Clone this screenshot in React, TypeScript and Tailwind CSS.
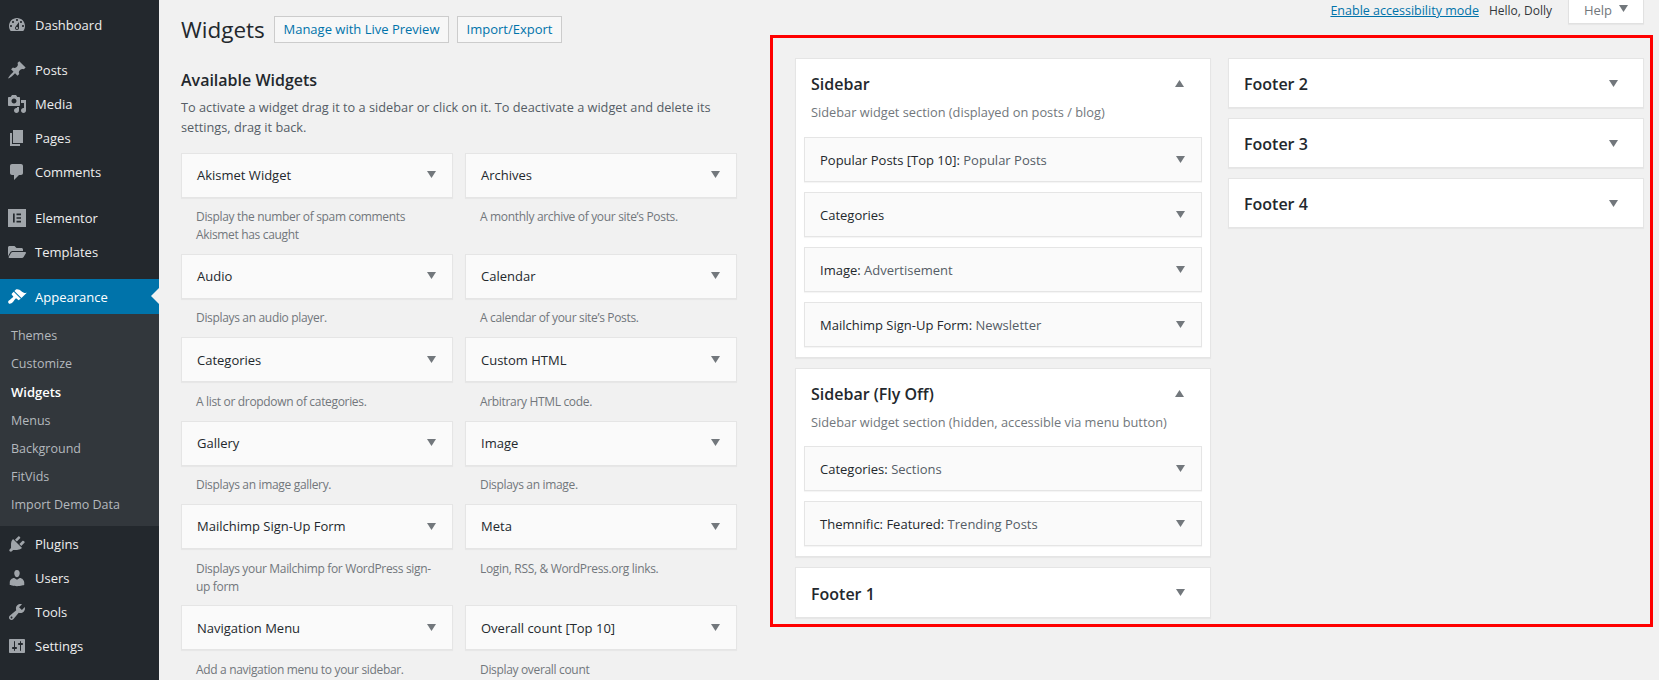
import { FaFolderOpen } from "react-icons/fa"

const icons: Record<string, string> = {
  dashboard: "M3.76 16h12.48c1.1-1.37 1.76-3.11 1.76-5 0-4.42-3.58-8-8-8s-8 3.58-8 8c0 1.89.66 3.63 1.76 5zM10 4c.55 0 1 .45 1 1s-.45 1-1 1-1-.45-1-1 .45-1 1-1zM6 6c.55 0 1 .45 1 1s-.45 1-1 1-1-.45-1-1 .45-1 1-1zm8 0c.55 0 1 .45 1 1s-.45 1-1 1-1-.45-1-1 .45-1 1-1zm-5.37 5.55L12 7v6c0 1.1-.9 2-2 2s-2-.9-2-2c0-.57.24-1.08.63-1.45zM4 10c.55 0 1 .45 1 1s-.45 1-1 1-1-.45-1-1 .45-1 1-1zm12 0c.55 0 1 .45 1 1s-.45 1-1 1-1-.45-1-1 .45-1 1-1zm-5 3c0-.55-.45-1-1-1s-1 .45-1 1 .45 1 1 1 1-.45 1-1z",
  posts: "M10.44 3.02l1.82-1.82 6.36 6.35-1.83 1.82c-1.05-.68-2.48-.57-3.41.36l-.75.75c-.92.93-1.04 2.35-.35 3.41l-1.83 1.82-2.41-2.41-2.8 2.79c-.42.42-3.38 2.71-3.8 2.29s1.86-3.39 2.28-3.81l2.79-2.79L4.1 9.36l1.83-1.82c1.05.69 2.48.57 3.4-.36l.75-.75c.93-.92 1.05-2.35.36-3.41z",
  media: "M13 11V4c0-.55-.45-1-1-1h-1.67L9 1H5L3.67 3H2c-.55 0-1 .45-1 1v7c0 .55.45 1 1 1h10c.55 0 1-.45 1-1zM7 4.5c1.38 0 2.5 1.12 2.5 2.5S8.38 9.5 7 9.5 4.5 8.38 4.5 7 5.62 4.5 7 4.5zM14 6h5v10.5c0 1.38-1.12 2.5-2.5 2.5S14 17.88 14 16.5s1.12-2.5 2.5-2.5c.17 0 .34.02.5.05V9h-3V6zm-4 8.05V13h2v3.5c0 1.38-1.12 2.5-2.5 2.5S7 17.88 7 16.5 8.12 14 9.5 14c.17 0 .34.02.5.05z",
  pages: "M6 15V2h10v13H6zm-1 1h8v2H3V5h2v11z",
  comments: "M5 2h9c1.1 0 2 .9 2 2v7c0 1.1-.9 2-2 2h-2l-5 5v-5H5c-1.1 0-2-.9-2-2V4c0-1.1.9-2 2-2z",
  appearance: "M14.48 11.06L7.41 3.99l1.5-1.5c.5-.56 2.3-.47 3.51.32 1.21.8 1.43 1.28 2.91 2.1 1.18.64 2.45 1.26 4.45.85zm-.71.71L6.7 4.7 4.93 6.47c-.39.39-.39 1.02 0 1.41l1.06 1.06c.39.39.39 1.03 0 1.42-.6.6-1.43 1.11-2.21 1.69-.35.26-.7.53-1.01.84C1.43 13.23.5 15 1.65 16.15s2.92.22 4.27-1.12c.31-.31.58-.66.84-1.01.58-.78 1.09-1.61 1.69-2.21.39-.39 1.02-.39 1.41 0l1.06 1.06c.39.39 1.02.39 1.41 0z",
  plugins: "M13.11 4.36L9.87 7.6 8 5.73l3.24-3.24c.35-.34 1.05-.2 1.56.32.52.51.66 1.21.31 1.55zm-8 1.77l.91-1.12 9.01 9.01-1.19.84c-.71.71-2.63 1.16-3.82 1.16H6.14L4.9 17.26c-.59.59-1.54.59-2.12 0-.59-.58-.59-1.53 0-2.12l1.24-1.24v-3.88c0-1.13.4-3.19 1.09-3.89zm7.26 3.97l3.24-3.24c.34-.35 1.04-.21 1.55.31.52.51.66 1.21.31 1.55l-3.24 3.25z",
  users: "M10 9.25c-2.27 0-2.73-3.44-2.73-3.44C7 4.02 7.82 2 9.97 2c2.16 0 2.98 2.02 2.71 3.81 0 0-.41 3.44-2.68 3.44zm0 2.57L12.72 10c2.39 0 4.52 2.33 4.52 4.53v2.49s-3.65 1.13-7.24 1.13c-3.65 0-7.24-1.13-7.24-1.13v-2.49c0-2.25 1.94-4.48 4.47-4.48z",
  tools: "M16.68 9.77c-1.34 1.34-3.3 1.67-4.95.99l-5.41 6.52c-.99.99-2.59.99-3.58 0s-.99-2.59 0-3.57l6.52-5.42c-.68-1.65-.35-3.61.99-4.95 1.28-1.28 3.12-1.62 4.72-1.06l-2.89 2.89 2.82 2.82 2.86-2.87c.53 1.58.18 3.39-1.08 4.65zM3.81 16.21c.4.39 1.04.39 1.43 0 .4-.4.4-1.04 0-1.43-.39-.4-1.03-.4-1.43 0-.39.39-.39 1.03 0 1.43z",
  settings: "M18 16V4c0-.55-.45-1-1-1H3c-.55 0-1 .45-1 1v12c0 .55.45 1 1 1h14c.55 0 1-.45 1-1zM8 11h1c.55 0 1 .45 1 1s-.45 1-1 1H8v1.5c0 .28-.22.5-.5.5s-.5-.22-.5-.5V13H6c-.55 0-1-.45-1-1s.45-1 1-1h1V5.5c0-.28.22-.5.5-.5s.5.22.5.5V11zm5-2h-1c-.55 0-1-.45-1-1s.45-1 1-1h1V5.5c0-.28.22-.5.5-.5s.5.22.5.5V7h1c.55 0 1 .45 1 1s-.45 1-1 1h-1v5.5c0 .28-.22.5-.5.5s-.5-.22-.5-.5V9z",
}

function MenuIcon({ name }: { name: string }) {
  if (name === "elementor") {
    return (
      <svg width="18" height="18" viewBox="0 0 18 18" className="fill-current">
        <path fillRule="evenodd" d="M0 0h18v18H0zM5 4.5v9h1.7v-9zM8.5 4.5v1.7H13V4.5zM8.5 8.2v1.6H13V8.2zM8.5 11.8v1.7H13v-1.7z" />
      </svg>
    )
  }
  if (name === "templates") return <FaFolderOpen size={18} />
  return (
    <svg width="20" height="20" viewBox="0 0 20 20" className="fill-current">
      <path d={icons[name]} />
    </svg>
  )
}

function MenuItem({ icon, label }: { icon: string; label: string }) {
  return (
    <div className="flex h-[34px] items-center text-[13px] text-[#eeeeee]">
      <span className="flex w-[35px] justify-center pl-[1px] pr-[2px] text-[#a0a5aa]">
        <MenuIcon name={icon} />
      </span>
      <span className="pt-[2px]">{label}</span>
    </div>
  )
}

function Arrow({ up = false, className = "" }: { up?: boolean; className?: string }) {
  return (
    <svg width="9" height="7" viewBox="0 0 9 7" className={"fill-[#72777c] " + className}>
      <polygon points={up ? "4.5,0 9,7 0,7" : "0,0 9,0 4.5,7"} />
    </svg>
  )
}

function Sidebar() {
  const submenu = ["Themes", "Customize", "Widgets", "Menus", "Background", "FitVids", "Import Demo Data"]
  return (
    <aside className="h-[680px] w-[159px] shrink-0 bg-[#23282d] pt-[8px]">
      <MenuItem icon="dashboard" label="Dashboard" />
      <div className="mt-[11px]">
        <MenuItem icon="posts" label="Posts" />
        <MenuItem icon="media" label="Media" />
        <MenuItem icon="pages" label="Pages" />
        <MenuItem icon="comments" label="Comments" />
      </div>
      <div className="mt-[12px]">
        <MenuItem icon="elementor" label="Elementor" />
        <MenuItem icon="templates" label="Templates" />
      </div>
      <div className="relative mt-[10px] flex h-[35px] items-center bg-[#0073aa] text-[13px] text-white">
        <span className="flex w-[35px] justify-center pl-[1px] pr-[2px]">
          <MenuIcon name="appearance" />
        </span>
        <span className="pt-[2px]">Appearance</span>
        <span className="absolute right-0 top-[9px] h-0 w-0 border-y-[8px] border-r-[8px] border-y-transparent border-r-[#f1f1f1]" />
      </div>
      <div className="flex h-[212px] flex-col bg-[#32373c] pt-[8.5px]">
        {submenu.map((s) => (
          <div
            key={s}
            className={
              "flex h-[28.2px] items-center pl-[11px] " +
              (s === "Widgets" ? "text-[13px] font-semibold text-white" : "text-[12.5px] text-[#b4b9be]")
            }
          >
            {s}
          </div>
        ))}
      </div>
      <div className="mt-[1px]">
        <MenuItem icon="plugins" label="Plugins" />
        <MenuItem icon="users" label="Users" />
        <MenuItem icon="tools" label="Tools" />
        <MenuItem icon="settings" label="Settings" />
      </div>
    </aside>
  )
}

const available = [
  { title: "Akismet Widget", desc: "Display the number of spam comments Akismet has caught" },
  { title: "Archives", desc: "A monthly archive of your site’s Posts." },
  { title: "Audio", desc: "Displays an audio player." },
  { title: "Calendar", desc: "A calendar of your site’s Posts." },
  { title: "Categories", desc: "A list or dropdown of categories." },
  { title: "Custom HTML", desc: "Arbitrary HTML code." },
  { title: "Gallery", desc: "Displays an image gallery." },
  { title: "Image", desc: "Displays an image." },
  { title: "Mailchimp Sign-Up Form", desc: "Displays your Mailchimp for WordPress sign-up form" },
  { title: "Meta", desc: "Login, RSS, & WordPress.org links." },
  { title: "Navigation Menu", desc: "Add a navigation menu to your sidebar." },
  { title: "Overall count [Top 10]", desc: "Display overall count" },
]

function AvailableWidgets() {
  return (
    <section className="w-[611px] shrink-0 pl-[22px] pr-[33px] pt-[16px]">
      <div className="flex h-[27px] items-center">
        <h1 className="w-[93px] pt-[1px] text-[22.5px] font-normal text-[#23282d]">Widgets</h1>
        <a className="mr-[8px] flex h-[27px] w-[175px] items-center justify-center border border-[#cccccc] bg-[#f7f7f7] text-[13px] font-medium text-[#0073aa]">
          Manage with Live Preview
        </a>
        <a className="flex h-[27px] w-[105px] items-center justify-center border border-[#cccccc] bg-[#f7f7f7] text-[13px] font-medium text-[#0073aa]">
          Import/Export
        </a>
      </div>
      <h2 className="mt-[26px] text-[16px] font-semibold leading-[22px] text-[#23282d]">Available Widgets</h2>
      <p className="mt-[6px] text-[12.75px] leading-[20px] text-[#555d66]">
        To activate a widget drag it to a sidebar or click on it. To deactivate a widget and delete its settings, drag it back.
      </p>
      <div className="mt-[15.5px] grid grid-cols-2 gap-x-[12px]">
        {available.map((w) => (
          <div key={w.title} className="pb-[9.9px]">
            <div className="flex h-[45px] items-center justify-between border border-[#e5e5e5] bg-[#fafafa] pl-[15px] pr-[16px] pt-[1px] shadow-[0_1px_1px_rgba(0,0,0,0.04)]">
              <span className="text-[13px] font-medium text-[#23282d]">{w.title}</span>
              <Arrow className="-mt-[2px]" />
            </div>
            <p className="mt-[10.5px] px-[15px] text-[12px] leading-[18px] tracking-[-0.33px] text-[#72777c]">{w.desc}</p>
          </div>
        ))}
      </div>
    </section>
  )
}

function InnerWidget({ title, sub }: { title: string; sub?: string }) {
  return (
    <div className="flex h-[45px] items-center justify-between border border-[#e5e5e5] bg-[#fafafa] pl-[15px] pr-[16px] shadow-[0_1px_1px_rgba(0,0,0,0.04)]">
      <span className="pt-[2px] text-[13px] font-medium text-[#23282d]">
        {title}
        {sub && <span className="font-normal text-[#555d66]"> {sub}</span>}
      </span>
      <Arrow />
    </div>
  )
}

function OpenArea({
  title,
  desc,
  widgets,
  listClass = "mt-[16px]",
}: {
  title: string
  desc: string
  widgets: { title: string; sub?: string }[]
  listClass?: string
}) {
  return (
    <div className="border border-[#e5e5e5] bg-white px-[8px] pb-[10px] shadow-[0_1px_1px_rgba(0,0,0,0.04)]">
      <div className="-mb-[6px] flex h-[50px] items-center justify-between pl-[7px] pr-[18px]">
        <h3 className="text-[16px] font-semibold text-[#23282d]">{title}</h3>
        <Arrow up className="-mt-[2px]" />
      </div>
      <p className="pl-[7px] text-[12.8px] leading-[18px] text-[#72777c]">{desc}</p>
      <div className={"flex flex-col gap-[10px] " + listClass}>
        {widgets.map((w) => (
          <InnerWidget key={w.title + w.sub} title={w.title} sub={w.sub} />
        ))}
      </div>
    </div>
  )
}

function ClosedArea({ title, heightClass = "h-[50px]" }: { title: string; heightClass?: string }) {
  return (
    <div className={"flex items-center justify-between border border-[#e5e5e5] bg-white pl-[15px] pr-[25px] pt-[2px] shadow-[0_1px_1px_rgba(0,0,0,0.04)] " + heightClass}>
      <h3 className="text-[16px] font-semibold text-[#23282d]">{title}</h3>
      <Arrow className="-mt-[2px]" />
    </div>
  )
}

function WidgetAreas() {
  return (
    <section className="w-[883px] shrink-0">
      <div className="flex h-[35px] items-start justify-end pr-[9px]">
        <a className="mr-[10px] mt-[2px] text-[12.5px] text-[#0073aa] underline">Enable accessibility mode</a>
        <span className="mr-[16px] mt-[1px] text-[12px] leading-[20px] text-[#32373c]">Hello, Dolly</span>
        <div className="flex h-[24px] w-[76px] items-start justify-center gap-[7px] border-x border-b border-[#e1e1e1] bg-white pt-[1px] text-[13px] text-[#72777c] shadow-[0_1px_1px_rgba(0,0,0,0.04)]">
          Help
          <Arrow className="mt-[4px]" />
        </div>
      </div>
      <div className="flex h-[592px] gap-[17px] border-[3px] border-[#ff0000] pl-[22px] pt-[20px]">
        <div className="flex w-[416px] flex-col gap-[10px]">
          <OpenArea
            title="Sidebar"
            desc="Sidebar widget section (displayed on posts / blog)"
            widgets={[
              { title: "Popular Posts [Top 10]:", sub: "Popular Posts" },
              { title: "Categories" },
              { title: "Image:", sub: "Advertisement" },
              { title: "Mailchimp Sign-Up Form:", sub: "Newsletter" },
            ]}
          />
          <OpenArea
            title="Sidebar (Fly Off)"
            desc="Sidebar widget section (hidden, accessible via menu button)"
            listClass="mt-[15px]"
            widgets={[
              { title: "Categories:", sub: "Sections" },
              { title: "Themnific: Featured:", sub: "Trending Posts" },
            ]}
          />
          <ClosedArea title="Footer 1" heightClass="h-[51px]" />
        </div>
        <div className="flex w-[416px] flex-col gap-[10px]">
          <ClosedArea title="Footer 2" />
          <ClosedArea title="Footer 3" />
          <ClosedArea title="Footer 4" />
        </div>
      </div>
    </section>
  )
}

export default function App() {
  return (
    <div className="flex h-[680px] overflow-hidden bg-[#f1f1f1] font-['Open_Sans',sans-serif]">
      <Sidebar />
      <AvailableWidgets />
      <WidgetAreas />
    </div>
  )
}
